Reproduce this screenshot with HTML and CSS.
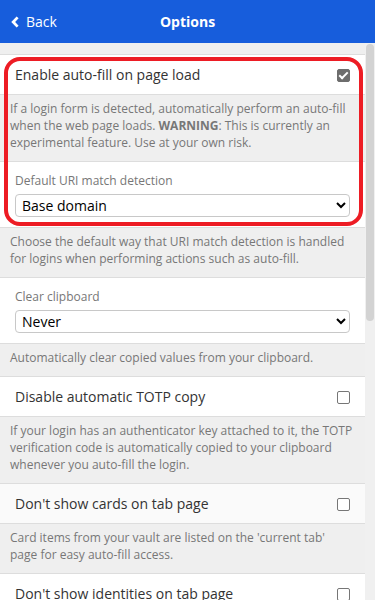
FILE: index.html
```html
<!DOCTYPE html>
<html lang="en">
<head>
    <meta charset="UTF-8">
    <meta name="viewport" content="width=device-width, initial-scale=1.0">
    <title>Options</title>
    <link rel="stylesheet" href="styles.css">
</head>
<body>
    <header class="app-header">
        <a href="#" class="back-link">
            <svg class="back-icon" viewBox="0 0 8 12" width="8" height="12"><path d="M6.6 1.4 L2.2 6 L6.6 10.6" fill="none" stroke="currentColor" stroke-width="2.8"/></svg>
            <span>Back</span>
        </a>
        <h1 class="header-title">Options</h1>
    </header>

    <div class="page-body">
        <main class="content">
            <div class="highlight">
                <div class="box-row">
                    <label for="autofillOnPageLoad">Enable auto-fill on page load</label>
                    <input type="checkbox" id="autofillOnPageLoad" checked>
                </div>
                <div class="box-footer">
                    If a login form is detected, automatically perform an auto-fill when the web page loads. <b>WARNING</b>: This is currently an experimental feature. Use at your own risk.
                </div>
                <div class="box-row select-row">
                    <label for="uriMatch">Default URI match detection</label>
                    <select id="uriMatch">
                        <option>Base domain</option>
                        <option>Host</option>
                        <option>Starts with</option>
                        <option>Exact</option>
                    </select>
                </div>
            </div>
            <div class="box-footer">
                Choose the default way that URI match detection is handled for logins when performing actions such as auto-fill.
            </div>

            <div class="box-row select-row">
                <label for="clearClipboard">Clear clipboard</label>
                <select id="clearClipboard">
                    <option>Never</option>
                    <option>10 seconds</option>
                    <option>1 minute</option>
                </select>
            </div>
            <div class="box-footer">
                Automatically clear copied values from your clipboard.
            </div>

            <div class="box-row">
                <label for="disableTotp">Disable automatic TOTP copy</label>
                <input type="checkbox" id="disableTotp">
            </div>
            <div class="box-footer">
                If your login has an authenticator key attached to it, the TOTP verification code is automatically copied to your clipboard whenever you auto-fill the login.
            </div>

            <div class="box-row hovered">
                <label for="hideCards">Don't show cards on tab page</label>
                <input type="checkbox" id="hideCards">
            </div>
            <div class="box-footer">
                Card items from your vault are listed on the 'current tab' page for easy auto-fill access.
            </div>

            <div class="box-row">
                <label for="hideIdentities">Don't show identities on tab page</label>
                <input type="checkbox" id="hideIdentities">
            </div>
            <div class="box-footer">
                Identity items from your vault are listed on the 'current tab' page for easy auto-fill access.
            </div>
        </main>

        <!-- drawn scrollbar: the list is longer than the window -->
        <div class="scrollbar">
            <div class="scroll-thumb"></div>
        </div>
    </div>
</body>
</html>
```

FILE: styles.css
```css
:root {
    --brand-blue: #175ddc;
    --page-gray: #efefef;
    --border: #dddddd;
    --text: #333333;
    --muted: #777777;
    --mark-red: #ed1c24;
}

* {
    box-sizing: border-box;
}

html, body {
    height: 100%;
}

body {
    margin: 0;
    display: flex;
    flex-direction: column;
    overflow: hidden;
    font-family: 'Open Sans', 'DejaVu Sans', sans-serif;
    font-size: 14px;
    color: var(--text);
    background-color: var(--page-gray);
}

/* top bar */
.app-header {
    flex: none;
    height: 43px;
    display: grid;
    grid-template-columns: 1fr auto 1fr;
    align-items: center;
    background-color: var(--brand-blue);
    color: white;
}

.back-link {
    justify-self: start;
    display: flex;
    align-items: center;
    gap: 7px;
    padding-left: 11px;
    color: white;
    text-decoration: none;
    line-height: 20px;
}

.back-icon {
    display: block;
}

.header-title {
    margin: 0;
    font-size: 14px;
    font-weight: 700;
    line-height: 20px;
}

.page-body {
    flex: 1;
    display: flex;
    min-height: 0;
}

/* list of options */
.content {
    flex: 1;
    min-width: 0;
    overflow: hidden;
    padding-top: 11px;
}

.scrollbar {
    flex: none;
    width: 10px;
    padding: 1px 1px 0;
    background-color: #f0f0f0;
}

.scroll-thumb {
    height: 277px;
    background-color: #d3d3d3;
    border-radius: 4px;
}

.highlight {
    position: relative;
}

/* red annotation drawn over the first group */
.highlight::after {
    content: '';
    position: absolute;
    top: 3px;
    left: 4px;
    right: 2px;
    bottom: 2px;
    border: 4px solid var(--mark-red);
    border-radius: 16px;
    pointer-events: none;
}

.box-row {
    display: flex;
    align-items: center;
    justify-content: space-between;
    padding: 10px 15px 9px;
    line-height: 20px;
    background-color: white;
    border-top: 1px solid var(--border);
    border-bottom: 1px solid var(--border);
}

.box-row.hovered {
    background-color: #fafafa;
}

.select-row {
    flex-direction: column;
    align-items: stretch;
    gap: 5px;
    padding: 10px 15px;
}

.select-row label {
    font-size: 12px;
    line-height: 17px;
    color: var(--muted);
}

select {
    height: 23px;
    padding: 0 2px;
    font-family: 'Open Sans', 'DejaVu Sans', sans-serif;
    font-size: 14px;
    color: #000;
    background-color: white;
    border: 1px solid #c8c8c8;
    border-radius: 4px;
}

.box-row input[type="checkbox"] {
    appearance: none;
    position: relative;
    flex: none;
    width: 13px;
    height: 13px;
    margin: 0;
    border: 1px solid #767676;
    border-radius: 2px;
    background-color: white;
}

.box-row input[type="checkbox"]:checked {
    background-color: #6d6d6d;
    border-color: #6d6d6d;
}

.box-row input[type="checkbox"]:checked::after {
    content: '';
    position: absolute;
    left: 3px;
    top: 0;
    width: 3px;
    height: 7px;
    border-right: 2px solid white;
    border-bottom: 2px solid white;
    transform: rotate(45deg);
}

.box-footer {
    padding: 5px 10px 10px;
    font-size: 12px;
    line-height: 17px;
    color: var(--muted);
}

.box-footer b {
    font-weight: 700;
}
```
